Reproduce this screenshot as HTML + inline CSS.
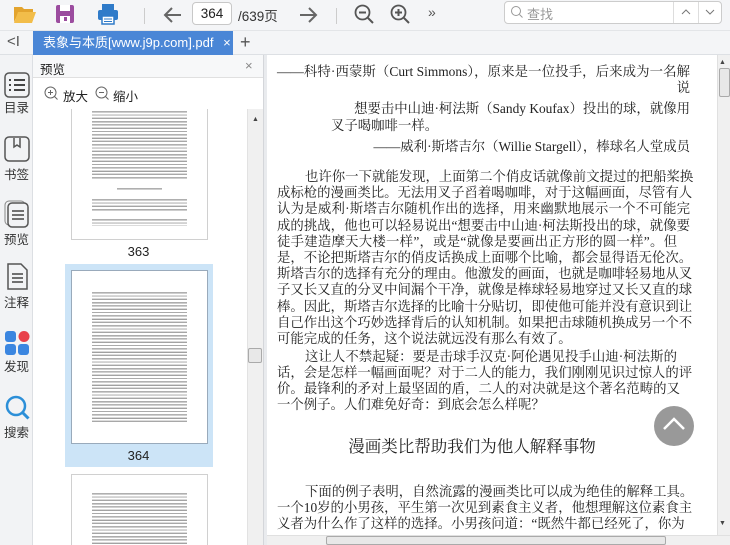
<!DOCTYPE html><html><head><meta charset="utf-8"><style>
*{margin:0;padding:0;box-sizing:border-box}
body{width:730px;height:545px;overflow:hidden;background:#fff;font-family:"Liberation Sans","Noto Sans CJK SC",sans-serif;position:relative}
.a{position:absolute}
#tb{left:0;top:0;width:730px;height:31px;background:#f4f5f7;border-bottom:1px solid #e3e5e8}
#tabs{left:0;top:31px;width:730px;height:24px;background:#f4f5f7;border-bottom:1px solid #dde0e4}
#tab{left:33px;top:31px;width:200px;height:24px;background:#4a86d6;color:#fff;font-size:13px;line-height:24px;padding-left:10px}
#side{left:0;top:55px;width:33px;height:490px;background:#f2f3f5;border-right:1px solid #dcdfe3}
.si{position:absolute;left:0;width:33px;text-align:center;font-size:12.5px;color:#333}
.thumb{position:absolute;left:38px;width:137px;background:#fff;border:1px solid #d0d0d0;overflow:hidden}
.lines{position:absolute;left:20px;right:20px;background:repeating-linear-gradient(#fff 0,#fff 1px,#bbb 1px,#999 2.4px,#fff 2.4px,#fff 3.3px)}
#doc{left:267px;top:55px;width:450px;height:480px;background:#fff;font-family:"Liberation Serif","Noto Serif CJK SC",serif;font-size:13.4px;color:#222;overflow:hidden}
.l{position:absolute;left:10px;width:413px;white-space:nowrap;line-height:18px}
.j{text-align:justify;text-align-last:justify}
</style></head><body>
<div id="tb" class="a"></div>
<svg class="a" style="left:13px;top:4px" width="24" height="20"><path d="M1 3h8l2 2h9v3H6L1 18z" fill="#e3a42e"/><path d="M5 8h18l-4 11H1z" fill="#f2bd4a"/></svg>
<svg class="a" style="left:55px;top:4px" width="20" height="20"><rect x="1" y="1" width="18" height="18" rx="2" fill="#9b4c9f"/><rect x="5" y="1" width="10" height="6" fill="#fff"/><rect x="5" y="12" width="10" height="7" fill="#fff"/><rect x="9" y="13" width="3" height="4" fill="#9b4c9f"/></svg>
<svg class="a" style="left:97px;top:3px" width="22" height="22"><rect x="5" y="1" width="12" height="6" fill="#2f7bc9"/><rect x="1" y="7" width="20" height="10" rx="2" fill="#2f7bc9"/><rect x="5" y="13" width="12" height="8" fill="#fff" stroke="#2f7bc9" stroke-width="1.5"/><line x1="7" y1="16" x2="15" y2="16" stroke="#2f7bc9"/><line x1="7" y1="18.5" x2="15" y2="18.5" stroke="#2f7bc9"/></svg>
<div class="a" style="left:144px;top:8px;width:1px;height:16px;background:#ccc"></div>
<svg class="a" style="left:162px;top:4px" width="22" height="22"><path d="M19 11H4M10 4l-7 7 7 7" stroke="#666" stroke-width="2" fill="none"/></svg>
<div class="a" style="left:192px;top:2px;width:40px;height:23px;border:1px solid #c8c8c8;border-radius:4px;background:#fff;font-size:13.5px;line-height:21px;text-align:center;color:#222">364</div>
<div class="a" style="left:238px;top:5px;font-size:13.5px;color:#333">/639页</div>
<svg class="a" style="left:297px;top:4px" width="22" height="22"><path d="M3 11h15M12 4l7 7-7 7" stroke="#666" stroke-width="2" fill="none"/></svg>
<div class="a" style="left:336px;top:8px;width:1px;height:16px;background:#ccc"></div>
<svg class="a" style="left:353px;top:3px" width="22" height="22"><circle cx="9.5" cy="9.5" r="7" stroke="#555" stroke-width="1.8" fill="none"/><path d="M6 9.5h7M15 15l5 5" stroke="#555" stroke-width="2"/></svg>
<svg class="a" style="left:389px;top:3px" width="22" height="22"><circle cx="9.5" cy="9.5" r="7" stroke="#555" stroke-width="1.8" fill="none"/><path d="M6 9.5h7M9.5 6v7M15 15l5 5" stroke="#555" stroke-width="2"/></svg>
<div class="a" style="left:428px;top:4px;font-size:14px;color:#555">»</div>
<div class="a" style="left:504px;top:1px;width:218px;height:23px;border:1px solid #ccc;border-radius:4px;background:#fff"></div>
<svg class="a" style="left:510px;top:5px" width="14" height="14"><circle cx="6" cy="6" r="4.5" stroke="#999" fill="none"/><path d="M9.5 9.5l3 3" stroke="#999"/></svg>
<div class="a" style="left:527px;top:4px;font-size:13px;color:#999">查找</div>
<div class="a" style="left:673px;top:2px;width:1px;height:21px;background:#ddd"></div>
<div class="a" style="left:698px;top:2px;width:1px;height:21px;background:#ddd"></div>
<svg class="a" style="left:681px;top:9px" width="10" height="6"><path d="M1 5l4-4 4 4" stroke="#777" fill="none"/></svg>
<svg class="a" style="left:705px;top:9px" width="10" height="6"><path d="M1 1l4 4 4-4" stroke="#777" fill="none"/></svg>
<div id="tabs" class="a"></div>
<div class="a" style="left:7px;top:33px;font-size:15px;color:#555">&lt;I</div>
<div id="tab" class="a">表象与本质[www.j9p.com].pdf <span style="margin-left:6px">×</span></div>
<div class="a" style="left:240px;top:32px;font-size:18px;color:#555">+</div>
<div id="side" class="a"></div>
<div class="si" style="top:72px"><svg width="26" height="26"><rect x="1" y="1" width="24" height="24" rx="4" stroke="#555" stroke-width="1.5" fill="none"/><path d="M5 8h2M10 8h11M5 13h2M10 13h11M5 18h2M10 18h11" stroke="#444" stroke-width="2"/></svg><div style="margin-top:-4px">目录</div></div>
<div class="si" style="top:136px"><svg width="26" height="26"><rect x="1" y="1" width="24" height="24" rx="4" stroke="#555" stroke-width="1.5" fill="none"/><path d="M10 2v9l3-2 3 2V2" stroke="#555" stroke-width="1.5" fill="none"/></svg><div style="margin-top:-1px">书签</div></div>
<div class="si" style="top:200px"><svg width="26" height="28"><rect x="1" y="1" width="20" height="24" rx="4" stroke="#888" fill="none"/><rect x="4" y="3" width="20" height="24" rx="4" stroke="#555" stroke-width="1.5" fill="#f2f3f5"/><path d="M8 11h12M8 15h12M8 19h12" stroke="#444" stroke-width="1.5"/></svg><div style="margin-top:-2px">预览</div></div>
<div class="si" style="top:263px"><svg width="26" height="28"><path d="M4 1h13l6 6v19H4z" stroke="#555" stroke-width="1.5" fill="none"/><path d="M8 11h11M8 15h11M8 19h11" stroke="#444" stroke-width="1.5"/></svg><div style="margin-top:-2px">注释</div></div>
<div class="si" style="top:330px"><svg width="26" height="26"><rect x="1" y="1" width="11" height="11" rx="3" fill="#3b86e0"/><circle cx="20" cy="6.5" r="5.5" fill="#e8404a"/><rect x="1" y="14" width="11" height="11" rx="3" fill="#3b86e0"/><rect x="14" y="14" width="11" height="11" rx="3" fill="#3b86e0"/></svg><div style="margin-top:-3px">发现</div></div>
<div class="si" style="top:394px"><svg width="26" height="28"><circle cx="12" cy="12" r="9" stroke="#2c8fd8" stroke-width="2.5" fill="none"/><path d="M18.5 18.5l6 6" stroke="#2c8fd8" stroke-width="3"/></svg><div style="margin-top:-3px">搜索</div></div>
<div class="a" style="left:33px;top:55px;width:230px;height:23px;border-bottom:1px solid #e0e0e0;background:#f7f8f9"></div>
<div class="a" style="left:40px;top:59px;font-size:12.5px;color:#222">预览</div>
<div class="a" style="left:245px;top:58px;font-size:13px;color:#888">×</div>
<svg class="a" style="left:44px;top:86px" width="14" height="14"><circle cx="6.5" cy="6.5" r="5.5" stroke="#666" fill="none"/><path d="M4 6.5h5M6.5 4v5M10.5 10.5l3 3" stroke="#666"/></svg>
<div class="a" style="left:63px;top:86px;font-size:12.5px;color:#222">放大</div>
<svg class="a" style="left:95px;top:86px" width="14" height="14"><circle cx="6.5" cy="6.5" r="5.5" stroke="#666" fill="none"/><path d="M4 6.5h5M10.5 10.5l3 3" stroke="#666"/></svg>
<div class="a" style="left:113px;top:86px;font-size:12.5px;color:#222">缩小</div>
<div class="a" style="left:33px;top:109px;width:214px;height:436px;overflow:hidden">
 <div class="thumb" style="top:-60px;height:191px"><div class="lines" style="top:60px;height:70px"></div><div class="lines" style="top:137px;height:3px;left:45px;right:45px"></div><div class="lines" style="top:148px;height:14px"></div><div class="lines" style="top:168px;height:8px"></div></div>
 <div class="a" style="left:0;width:211px;top:135px;text-align:center;font-size:13px;color:#222">363</div>
 <div class="a" style="left:32px;top:155px;width:148px;height:203px;background:#cce4f7"></div>
 <div class="thumb" style="top:161px;height:174px;border-color:#9ab"><div class="lines" style="top:20px;height:132px"></div></div>
 <div class="a" style="left:0;width:211px;top:339px;text-align:center;font-size:13px;color:#222">364</div>
 <div class="thumb" style="top:365px;height:80px"><div class="lines" style="top:17px;height:60px"></div></div>
</div>
<div class="a" style="left:247px;top:109px;width:16px;height:436px;background:#f0f0f0;border-left:1px solid #e2e2e2"></div>
<div class="a" style="left:252px;top:116px;font-size:7px;color:#444">▲</div>
<div class="a" style="left:248px;top:348px;width:14px;height:15px;background:#e8e8e8;border:1px solid #aaa;border-radius:2px"></div>
<div class="a" style="left:263px;top:55px;width:4px;height:490px;background:#e9ebee;border-left:1px solid #d4d6da"></div>
<div id="doc" class="a">
<div class="l j" style="top:8px">——科特·西蒙斯（Curt Simmons），原来是一位投手，后来成为一名解</div>
<div class="l" style="top:24px;text-align:right">说</div>
<div class="l" style="top:45px;text-align:right">想要击中山迪·柯法斯（Sandy Koufax）投出的球，就像用</div>
<div class="l" style="top:62px;left:64px">叉子喝咖啡一样。</div>
<div class="l" style="top:83px;text-align:right">——威利·斯塔吉尔（Willie Stargell），棒球名人堂成员</div>
<div class="l j" style="top:113px;padding-left:28px">也许你一下就能发现，上面第二个俏皮话就像前文提过的把船桨换</div>
<div class="l j" style="top:129.2px">成标枪的漫画类比。无法用叉子舀着喝咖啡，对于这幅画面，尽管有人</div>
<div class="l j" style="top:145.4px">认为是威利·斯塔吉尔随机作出的选择，用来幽默地展示一个不可能完</div>
<div class="l j" style="top:161.6px">成的挑战，他也可以轻易说出“想要击中山迪·柯法斯投出的球，就像要</div>
<div class="l" style="top:177.8px;width:400px;text-align:justify;text-align-last:justify">徒手建造摩天大楼一样”，或是“就像是要画出正方形的圆一样”。但</div>
<div class="l j" style="top:194px">是，不论把斯塔吉尔的俏皮话换成上面哪个比喻，都会显得语无伦次。</div>
<div class="l j" style="top:210.2px">斯塔吉尔的选择有充分的理由。他激发的画面，也就是咖啡轻易地从叉</div>
<div class="l j" style="top:226.4px">子又长又直的分叉中间漏个干净，就像是棒球轻易地穿过又长又直的球</div>
<div class="l j" style="top:242.6px">棒。因此，斯塔吉尔选择的比喻十分贴切，即使他可能并没有意识到让</div>
<div class="l j" style="top:258.8px">自己作出这个巧妙选择背后的认知机制。如果把击球随机换成另一个不</div>
<div class="l" style="top:275px">可能完成的任务，这个说法就远没有那么有效了。</div>
<div class="l" style="top:293px;padding-left:28px;width:400px;text-align:justify;text-align-last:justify">这让人不禁起疑：要是击球手汉克·阿伦遇见投手山迪·柯法斯的</div>
<div class="l j" style="top:309px">话，会是怎样一幅画面呢？对于二人的能力，我们刚刚见识过惊人的评</div>
<div class="l" style="top:325px;width:403px;text-align:justify;text-align-last:justify">价。最锋利的矛对上最坚固的盾，二人的对决就是这个著名范畴的又</div>
<div class="l" style="top:341px">一个例子。人们难免好奇：到底会怎么样呢？</div>
<div class="l" style="top:382px;left:-20px;width:450px;text-align:center;font-size:16.5px;line-height:20px">漫画类比帮助我们为他人解释事物</div>
<div class="l j" style="top:428px;padding-left:28px">下面的例子表明，自然流露的漫画类比可以成为绝佳的解释工具。</div>
<div class="l j" style="top:444px">一个10岁的小男孩，平生第一次见到素食主义者，他想理解这位素食主</div>
<div class="l" style="top:460px;width:405px;text-align:justify;text-align-last:justify">义者为什么作了这样的选择。小男孩问道：“既然牛都已经死了，你为</div>
</div>
<div class="a" style="left:654px;top:406px;width:40px;height:40px;border-radius:50%;background:#999"></div>
<svg class="a" style="left:662px;top:416px" width="24" height="16"><path d="M2 13L12 3l10 10" stroke="#fff" stroke-width="2.5" fill="none"/></svg>
<div class="a" style="left:717px;top:55px;width:13px;height:480px;background:#f0f0f0;border-left:1px solid #e0e0e0"></div>
<div class="a" style="left:719px;top:59px;font-size:7px;color:#444">▲</div>
<div class="a" style="left:719px;top:68px;width:11px;height:29px;background:#e8e8e8;border:1px solid #aaa;border-radius:2px"></div>
<div class="a" style="left:719px;top:520px;font-size:7px;color:#444">▼</div>
<div class="a" style="left:267px;top:535px;width:463px;height:10px;background:#f0f0f0;border-top:1px solid #e0e0e0"></div>
<div class="a" style="left:326px;top:536px;width:340px;height:9px;background:#e8e8e8;border:1px solid #aaa;border-radius:2px"></div>
</body></html>
